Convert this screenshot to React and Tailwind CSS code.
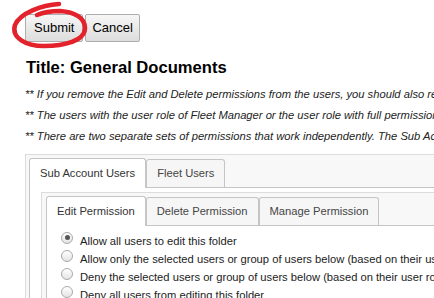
import React from 'react';

const NOTES = [
  '** If you remove the Edit and Delete permissions from the users, you should also remove the Manage permission from them.',
  '** The users with the user role of Fleet Manager or the user role with full permissions will always have access to this folder.',
  '** There are two separate sets of permissions that work independently. The Sub Account Users and the Fleet Users are set apart.',
];

const OPTIONS = [
  'Allow all users to edit this folder',
  'Allow only the selected users or group of users below (based on their user role)',
  'Deny the selected users or group of users below (based on their user role)',
  'Deny all users from editing this folder',
];

function Tabs({ items, active }) {
  return (
    <div className="flex items-end">
      {items.map((t, i) =>
        i === active ? (
          <div
            key={t}
            className="relative z-10 h-[30px] -mb-px px-[10px] flex items-center bg-white border border-b-0 border-[#c5c5c5] rounded-t-[3px] text-[#333]"
          >
            {t}
          </div>
        ) : (
          <div
            key={t}
            className="h-[28px] px-[10px] flex items-center bg-[#f6f6f6] border border-b-0 border-[#c5c5c5] rounded-t-[3px] text-[#454545]"
          >
            {t}
          </div>
        )
      )}
    </div>
  );
}

function Radio({ checked }) {
  return (
    <div className="w-[12px] h-[12px] mb-[7px] shrink-0 rounded-full border border-[#a9a9a9] bg-gradient-to-b from-white to-[#e4e4e4] flex items-center justify-center">
      {checked && <div className="w-[5px] h-[5px] rounded-full bg-[#555]" />}
    </div>
  );
}

export default function App() {
  return (
    <div className="relative w-[434px] h-[298px] overflow-hidden bg-white font-['Liberation_Sans',Arial,sans-serif] text-[11.2px] text-[#222]">
      <div className="w-[900px] pl-[25px] pt-[14px]">
        <div className="flex gap-[2px]">
          <button className="h-[28px] px-[8px] text-[13px] text-black border border-[#adadad] rounded-[2px] bg-gradient-to-b from-[#f6f6f6] to-[#dddddd]">
            Submit
          </button>
          <button className="h-[28px] px-[6px] text-[13px] text-black border border-[#adadad] rounded-[2px] bg-gradient-to-b from-[#f6f6f6] to-[#dddddd]">
            Cancel
          </button>
        </div>

        <h1 className="mt-[16px] ml-px text-[16.6px] leading-[19px] font-bold text-black">
          Title: General Documents
        </h1>

        <div className="mt-[7px]">
          {NOTES.map((n) => (
            <p key={n} className="h-[21px] leading-[21px] italic whitespace-nowrap">
              {n}
            </p>
          ))}
        </div>

        <div className="mt-[7px] border border-[#dcdcdc] bg-[#f8f8f8] pt-[3px] pl-[3px]">
          <Tabs items={['Sub Account Users', 'Fleet Users']} active={0} />
          <div className="border-t border-l border-[#c5c5c5] bg-white pt-[4px] pl-[11px]">
            <div className="border border-[#dcdcdc] bg-[#f8f8f8] pt-[3px] pl-[4px]">
              <Tabs items={['Edit Permission', 'Delete Permission', 'Manage Permission']} active={0} />
              <div className="border-t border-l border-[#c5c5c5] bg-white pt-[6px] pl-[14px] h-[120px]">
                {OPTIONS.map((o, i) => (
                  <div key={o} className="h-[18px] flex items-center gap-[7px] whitespace-nowrap">
                    <Radio checked={i === 0} />
                    <span>{o}</span>
                  </div>
                ))}
              </div>
            </div>
          </div>
        </div>
      </div>

      <svg className="absolute left-0 top-0" width="100" height="55" viewBox="0 0 100 55" fill="none">
        <path
          d="M59 4 C 42 5, 20 13, 15 25 C 11 38, 26 46, 44 46 C 64 46, 85 41, 85 28 C 85 18, 75 12, 60 11 C 52 11, 44 12, 37 15"
          stroke="#e3222b"
          strokeWidth="4.5"
          strokeLinecap="round"
        />
      </svg>
    </div>
  );
}
